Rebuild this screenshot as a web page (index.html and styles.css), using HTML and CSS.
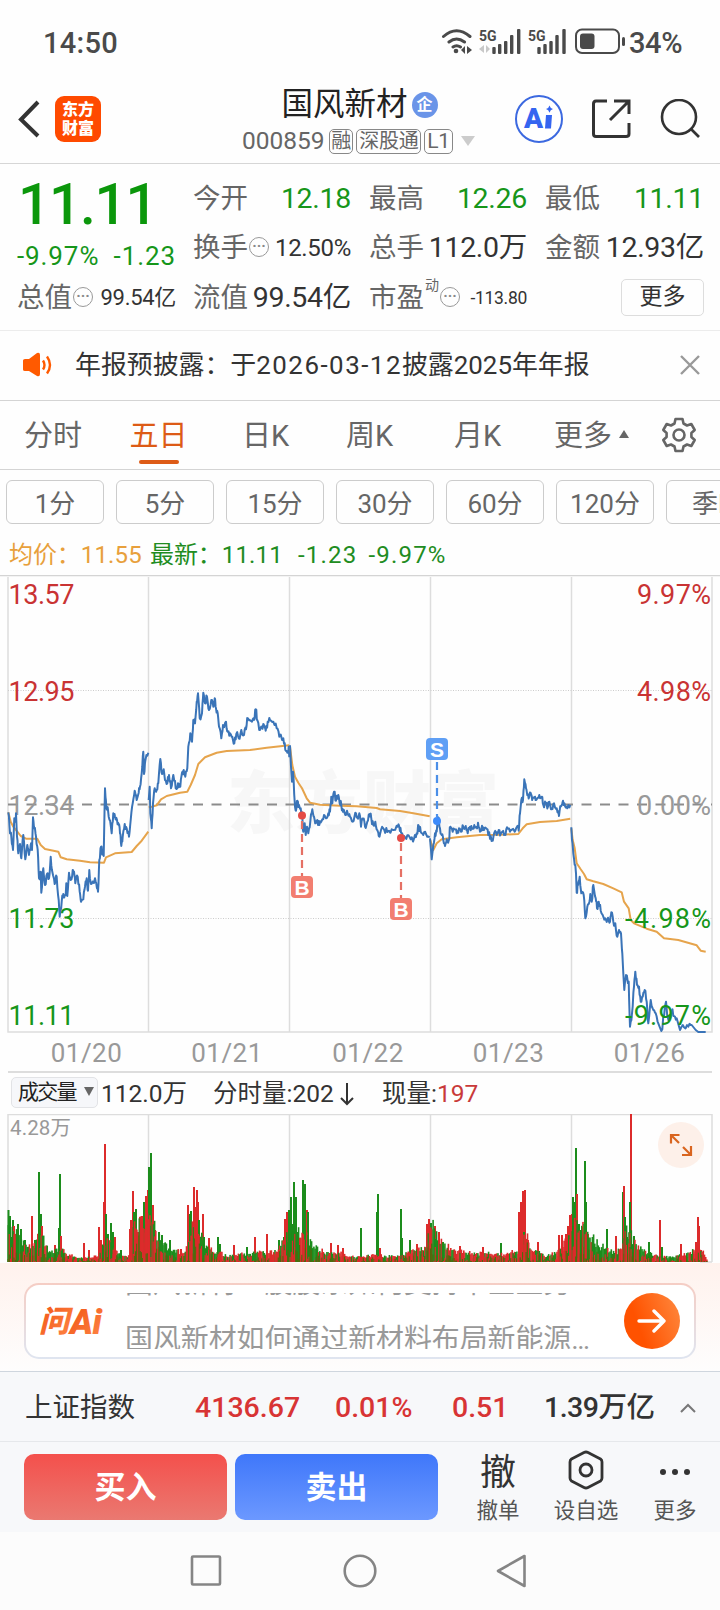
FILE: index.html
```html
<!DOCTYPE html>
<html lang="zh-CN">
<head>
<meta charset="utf-8">
<title>国风新材 000859</title>
<link rel="stylesheet" href="styles.css">
</head>
<body>
<div class="status">
  <span class="clock">14:50</span>
  <svg class="status-icons" width="186" height="30" viewBox="0 0 186 30">
    <g fill="none" stroke="#4a4a4a" stroke-width="3" stroke-linecap="round">
      <path d="M2.500 8.500Q15.500 -3 29 8.500M8 14Q15.500 8 23.500 14M12 19Q15.500 16.500 19.500 19"/>
    </g>
    <circle cx="15" cy="23" r="2.300" fill="#4a4a4a"/>
    <path d="M24 18v8l-4-4zM26 18v8l5-4z" fill="#4a4a4a"/>
    <text x="38" y="12.500" class="net">5G</text>
    <path d="M43 17v8l-5-4zM45 17v8l4-4z" fill="#c8c8c8"/>
    <g fill="#4a4a4a">
      <rect x="51.300" y="19" width="3.400" height="7" rx="1"/><rect x="57" y="16" width="3.400" height="10" rx="1"/><rect x="63" y="13" width="3.400" height="13" rx="1"/><rect x="69" y="7" width="3.400" height="19" rx="1"/><rect x="76" y="1" width="3.400" height="25" rx="1"/>
      <rect x="96.300" y="19" width="3.400" height="7" rx="1"/><rect x="102.300" y="16" width="3.400" height="10" rx="1"/><rect x="108.300" y="13" width="3.400" height="13" rx="1"/><rect x="114.300" y="7" width="3.400" height="19" rx="1"/><rect x="121.300" y="1" width="3.400" height="25" rx="1"/>
    </g>
    <text x="87" y="12.500" class="net">5G</text>
    <rect x="135" y="1.500" width="43" height="23.500" rx="6" fill="none" stroke="#4a4a4a" stroke-width="2"/>
    <rect x="139" y="5.500" width="14.500" height="15.500" rx="3" fill="#4a4a4a"/>
    <rect x="181" y="9" width="3" height="9" rx="1.500" fill="#4a4a4a"/>
  </svg>
  <span class="battery">34%</span>
</div>

<header class="header">
  <div class="head-left">
    <svg width="22" height="38" viewBox="0 0 22 38"><path d="M20 2L3 19.500L20 36" fill="none" stroke="#333" stroke-width="4"/></svg>
    <div class="logo"><span>东方</span><span>财富</span></div>
  </div>
  <div class="head-mid">
    <div class="name">国风新材<span class="qi">企</span></div>
    <div class="code"><span>000859</span><b class="tag t1">融</b><b class="tag t2">深股通</b><b class="tag t3">L1</b><i class="caret"></i></div>
  </div>
  <div class="head-right">
    <svg width="50" height="50" viewBox="0 0 50 50"><circle cx="25" cy="25" r="23" fill="#fff" stroke="#3c69e0" stroke-width="2"/><text x="10" y="34" class="ai">A</text><path d="M32 21h6l-1 13.500h-6zM35.500 11.500q.8 3 3.500 3.500q-2.700.7-3.500 3.700q-.8-3-3.500-3.700q2.700-.5 3.500-3.500z" fill="#3565f0"/></svg>
    <svg width="40" height="40" viewBox="0 0 40 40" fill="none" stroke="#333" stroke-width="3"><path d="M16 2H5Q2.500 2 2.500 5V35Q2.500 37.500 5 37.500H35Q38 37.500 38 35V24M23 2H38V15M37 3L19 21"/></svg>
    <svg width="40" height="40" viewBox="0 0 40 40" fill="none" stroke="#333" stroke-width="2.600"><circle cx="19" cy="18" r="17"/><path d="M31 30L39 38"/></svg>
  </div>
</header>

<section class="quote">
  <div class="lead">
    <div class="price">11.11</div>
    <div class="change"><span>-9.97%</span><span>-1.23</span></div>
    <div class="cell"><label>总值</label><i class="more-dot">···</i><span class="v v22">99.54亿</span></div>
  </div>
  <div class="stats">
    <div class="cell"><label>今开</label><span class="v g">12.18</span></div>
    <div class="cell"><label>最高</label><span class="v g">12.26</span></div>
    <div class="cell"><label>最低</label><span class="v g">11.11</span></div>
    <div class="cell"><label>换手</label><i class="more-dot">···</i><span class="v v24">12.50%</span></div>
    <div class="cell"><label>总手</label><span class="v">112.0万</span></div>
    <div class="cell"><label>金额</label><span class="v">12.93亿</span></div>
    <div class="cell"><label>流值</label><span class="v">99.54亿</span></div>
    <div class="cell"><label>市盈</label><sup>动</sup><i class="more-dot">···</i><span class="v v17">-113.80</span></div>
    <div class="cell"><span class="more-btn">更多</span></div>
  </div>
</section>

<section class="notice">
  <svg width="30" height="26" viewBox="0 0 30 26"><path d="M1 8.500Q1 7 3 7H7L15 1Q18 0 18 3V22Q18 25 15 24L7 19H3Q1 19 1 17.500z" fill="#ff5a00"/><path d="M21 8.500Q24 13 21 17.500M25 4.500Q31 13 25 21.500" fill="none" stroke="#ff5a00" stroke-width="2.400"/></svg>
  <p>年报预披露：于<span class="date">2026-03-12</span>披露2025年年报</p>
  <svg width="20" height="20" viewBox="0 0 20 20"><path d="M1 1L19 19M19 1L1 19" stroke="#999" stroke-width="2.400"/></svg>
</section>

<nav class="tabs">
  <span class="w1">分时</span><span class="w2 on">五日</span><span class="w3">日K</span><span class="w4">周K</span><span class="w5">月K</span><span class="w6">更多<i class="up"></i></span>
  <svg width="36" height="36" viewBox="-18 -18 36 36" fill="none" stroke="#666" stroke-width="2.600" stroke-linejoin="round"><path d="M-3.500 -16H3.500L4.500 -11.500L8 -9.500L12.300 -11L15.700 -5L12.400 -2V2L15.700 5L12.300 11L8 9.500L4.500 11.500L3.500 16H-3.500L-4.500 11.500L-8 9.500L-12.300 11L-15.700 5L-12.400 2V-2L-15.700 -5L-12.300 -11L-8 -9.500L-4.500 -11.500Z"/><circle r="5.500"/></svg>
</nav>

<div class="chips"><span>1分</span><span>5分</span><span>15分</span><span>30分</span><span>60分</span><span>120分</span><span>季K</span></div>

<div class="info"><span class="avg">均价：<em>11.55</em></span><span class="last">最新：<em>11.11</em><em class="wide">-1.23</em><em class="wide">-9.97%</em></span></div>

<svg class="chart" width="720" height="498" viewBox="0 575 720 498">
  <text x="227" y="828" class="wm" textLength="272">东方财富</text>
  <g stroke="#ddd" stroke-width="1.500" fill="none">
    <path d="M0 575.500H720" stroke="#d4d4d4"/>
    <path d="M8 577V1032H712V577M148.500 577V1032M289.500 577V1032M430.500 577V1032M571.500 577V1032"/>
    <path d="M8 690.500H712M8 918.500H712" stroke-width="1" stroke-dasharray="1 1.500" stroke="#ccc"/>
    <path d="M8 1072H712" stroke-width="2"/>
  </g>
  <path d="M8 804.500H712" stroke="#8c8c8c" stroke-width="2" stroke-dasharray="10 8.500"/>
  <g class="axis">
    <text x="8.500" y="604" class="r" textLength="66">13.57</text>
    <text x="8.500" y="701" class="r" textLength="66">12.95</text>
    <text x="8.500" y="815" class="n" textLength="66">12.34</text>
    <text x="8.500" y="928" class="g" textLength="66">11.73</text>
    <text x="8.500" y="1024.500" class="g" textLength="66">11.11</text>
  </g>
  <g id="lines" fill="none" stroke-linejoin="round"></g>
  <g class="axis end">
    <text x="711" y="604" class="r" textLength="74">9.97%</text>
    <text x="711" y="701" class="r" textLength="74">4.98%</text>
    <text x="711" y="815" class="n" textLength="74">0.00%</text>
    <text x="711" y="928" class="g" textLength="86">-4.98%</text>
    <text x="711" y="1024.500" class="g" textLength="86">-9.97%</text>
  </g>
  <g class="dates">
    <text x="86.500" y="1062">01/20</text><text x="227" y="1062">01/21</text><text x="368" y="1062">01/22</text><text x="508.500" y="1062">01/23</text><text x="649.500" y="1062">01/26</text>
  </g>
  <g stroke-width="2.200" stroke-dasharray="8 5" fill="none">
    <path d="M302 821V876M401 843V898" stroke="#e57064"/>
    <path d="M437 762V817" stroke="#4b8fe8"/>
  </g>
  <g fill="#e54b45"><circle cx="302" cy="815.500" r="4"/><circle cx="401" cy="838" r="4"/></g>
  <circle cx="437" cy="821" r="4" fill="#3d8bfa"/>
  <g fill="#f27e70"><rect x="291" y="876" width="22" height="22" rx="4"/><rect x="390" y="898" width="22" height="22" rx="4"/></g>
  <rect x="426" y="738" width="22" height="22" rx="4" fill="#5f9ff5"/>
  <g class="mark"><text x="302" y="894.500">B</text><text x="401" y="916.500">B</text><text x="437" y="756.500">S</text></g>
</svg>

<div class="volbar">
  <span class="pick">成交量<i class="down"></i></span><span class="v1">112.0万</span><span class="v2">分时量:202<svg width="14" height="24" viewBox="0 0 14 24"><path d="M7 1V22M1 16L7 22L13 16" fill="none" stroke="#333" stroke-width="2"/></svg></span><span class="v3">现量:<em>197</em></span>
</div>

<svg class="volume" width="720" height="149" viewBox="0 1114 720 149">
  <g stroke="#ddd" stroke-width="1.500" fill="none"><path d="M8 1262V1114.500H712V1262M148.500 1114V1262M289.500 1114V1262M430.500 1114V1262M571.500 1114V1262"/><path d="M700 1262H712"/></g>
  <text x="10" y="1135" class="vmax" textLength="61">4.28万</text>
  <g id="bars"></g>
  <circle cx="681" cy="1145" r="23" fill="#fdf0e9"/>
  <path d="M679 1143L671 1135M671 1143.500V1135H679.500M683 1147L691 1155M691 1146V1155H682" fill="none" stroke="#d9651f" stroke-width="2.200"/>
</svg>

<section class="ask">
  <div class="ask-card">
    <svg width="68" height="32" viewBox="0 0 68 32"><defs><linearGradient id="og" x1="0" y1="0" x2="1" y2="1"><stop offset="0" stop-color="#f04f10"/><stop offset="1" stop-color="#ff8a4a"/></linearGradient></defs><g fill="url(#og)"><text x="-1" y="27" class="wen">问</text><text x="30" y="28.500" class="wai">Ai</text></g></svg>
    <div class="ticker"><p>国风新材一股股东如何支持中企业务</p><p>国风新材如何通过新材料布局新能源…</p></div>
    <span class="go"><svg width="30" height="24" viewBox="0 0 30 24"><path d="M2 12H27M17 2L27 12L17 22" fill="none" stroke="#fff" stroke-width="3.400" stroke-linecap="round" stroke-linejoin="round"/></svg></span>
  </div>
</section>

<section class="index">
  <span class="i0">上证指数</span><span class="i1">4136.67</span><span class="i2">0.01%</span><span class="i3">0.51</span><span class="i4">1.39万亿</span>
  <svg width="16" height="10" viewBox="0 0 16 10"><path d="M1 9L8 2L15 9" fill="none" stroke="#777" stroke-width="2"/></svg>
</section>

<section class="trade">
  <span class="btn buy">买入</span><span class="btn sell">卖出</span>
  <div class="act a1"><b>撤</b><span>撤单</span></div>
  <div class="act a2"><svg width="40" height="40" viewBox="-20 -20 40 40" fill="none" stroke="#333" stroke-width="2.800" stroke-linejoin="round"><path d="M-2 -17.500Q0 -18.500 2 -17.500L14.500 -11Q16 -10 16 -8V8Q16 10 14.500 11L2 17.500Q0 18.500 -2 17.500L-14.500 11Q-16 10 -16 8V-8Q-16 -10 -14.500 -11Z"/><circle r="6"/></svg><span>设自选</span></div>
  <div class="act a3"><svg width="40" height="40" viewBox="-20 -20 40 40" fill="#333"><circle cx="-12" cy="2" r="3"/><circle cy="2" r="3"/><circle cx="12" cy="2" r="3"/></svg><span>更多</span></div>
</section>

<footer class="sysnav">
  <svg width="340" height="36" viewBox="0 0 340 36" fill="none" stroke="#858585" stroke-width="2.600" stroke-linejoin="round"><rect x="3" y="3.500" width="28" height="28" rx="1"/><circle cx="171" cy="18" r="15.300"/><path d="M335.500 3V33L309 18Z"/></svg>
</footer>
<script src="chart.js"></script>
</body>
</html>
```
FILE: styles.css
```css
* { box-sizing: border-box; }
body { margin: 0; width: 720px; background: #fefefe; color: #333; font-family: Roboto, "Noto Sans CJK SC", sans-serif; overflow: hidden; }
svg { display: block; flex: none; }
i, em { font-style: normal; }
p { margin: 0; }
.status { height: 84px; padding: 1px 0 0 43px; display: flex; align-items: center; font-size: 29px; font-weight: 500; color: #4a4a4a; }
.clock { width: 74px; letter-spacing: .3px; }
.status-icons { margin-left: 324px; }
.net { font: 700 14px Roboto, sans-serif; fill: #4a4a4a; }
.battery { margin-left: 2px; letter-spacing: -.4px; }
.header { height: 80px; border-bottom: 1px solid #d6d6d6; display: grid; grid-template-columns: 242px 233px 1fr; }
.head-left { display: flex; align-items: center; padding: 0 0 9px 18px; gap: 15px; }
.logo { width: 46px; height: 46px; border-radius: 9px; background: #ff4a00; color: #fff; font-size: 16px; font-weight: 900; line-height: 19px; display: flex; flex-direction: column; align-items: center; justify-content: center; }
.head-mid { display: flex; flex-direction: column; }
.name { height: 41px; display: flex; align-items: center; justify-content: center; font-size: 31.500px; line-height: 40px; color: #222; white-space: nowrap; gap: 4px; padding-left: 2px; }
.qi { width: 26px; height: 26px; border-radius: 50%; background: #6a94e8; color: #fff; font-size: 16px; font-weight: 700; line-height: 25px; text-align: center; }
.code { display: flex; align-items: center; height: 32px; font-size: 24.500px; color: #666; line-height: 30px; }
.code span { width: 87px; }
.tag { height: 25px; border: 1.500px solid #888; border-radius: 5px; font-weight: 400; font-size: 20px; line-height: 22px; text-align: center; margin-right: 3px; white-space: nowrap; letter-spacing: -.3px; }
.t1 { width: 25px; }
.t2 { width: 65px; }
.t3 { width: 29px; font-size: 21px; }
.caret { margin-left: 5px; border: 7px solid transparent; border-top: 10px solid #ccc; border-bottom: 0; }
.head-right { display: flex; align-items: center; padding: 0 0 9px 39px; gap: 27px; }
.head-right svg:nth-child(2) { margin-right: 2px; }
.ai { font: 900 28px Roboto, sans-serif; fill: #3565f0; }
.quote { height: 167px; padding: 10px 16px 0 17px; border-bottom: 1px solid #ececec; display: grid; grid-template-columns: 159px 511px; gap: 17px; }
.price { height: 63px; line-height: 62px; font-size: 57px; font-weight: 500; color: #0b970b; letter-spacing: -1.400px; padding-left: 1px; }
.change { height: 36px; line-height: 38px; font-size: 26px; color: #16961a; display: flex; justify-content: space-between; letter-spacing: .9px; }
.stats { display: grid; grid-template-columns: 158px 158px 159px; grid-auto-rows: 49.500px; column-gap: 18px; }
.cell { display: flex; align-items: center; height: 49.500px; white-space: nowrap; }
.cell label { font-size: 27.500px; color: #666; line-height: 40px; }
.v { margin-left: auto; font-size: 28.500px; color: #333; letter-spacing: -.3px; line-height: 40px; }
.v22 { font-size: 22px; }
.v24 { font-size: 24px; }
.v17 { font-size: 17.500px; }
.g { color: #16961a; fill: #16961a; }
.more-dot { width: 20px; height: 20px; border: 1.500px solid #999; border-radius: 50%; font-size: 15px; font-weight: 700; line-height: 17px; text-align: center; color: #888; margin: 0 0 2px 1px; }
.cell sup { font-size: 14px; line-height: 14px; color: #666; align-self: flex-start; margin: 5px 0 0 1px; }
.more-btn { margin-left: auto; width: 83px; height: 37px; border: 1px solid #ddd; border-radius: 5px; font-size: 23px; line-height: 34px; text-align: center; }
.notice { height: 70px; padding: 0 20px 1px 22px; border-bottom: 1px solid #d4d4d4; display: flex; align-items: center; }
.notice p { font-size: 25.900px; margin-left: 23px; flex: 1; line-height: 40px; white-space: nowrap; }
.date { letter-spacing: 1.500px; }
.tabs { height: 69px; border-bottom: 1px solid #d4d4d4; display: flex; font-size: 29px; color: #666; line-height: 71px; padding-left: 24px; align-items: center; white-space: nowrap; }
.tabs span { position: relative; height: 68px; }
.tabs svg { margin-left: 32px; }
.w1 { width: 105.500px; } .w2 { width: 112.500px; } .w3 { width: 104px; } .w4 { width: 108px; } .w5 { width: 100px; } .w6 { width: 75px; }
.on { color: #dd5b16; }
.on::after { content: ""; position: absolute; left: 9px; top: 59px; width: 40px; height: 4px; border-radius: 2px; background: #dd5b16; }
.up { display: inline-block; border: 5px solid transparent; border-bottom: 8px solid #666; border-top: 0; margin-left: 7px; vertical-align: 8px; }
.chips { height: 63px; padding: 10px 0 0 6px; display: flex; gap: 12px; overflow: hidden; }
.chips span { flex: 0 0 98px; height: 44px; border: 1px solid #ccc; border-radius: 6px; font-size: 26px; line-height: 46px; text-align: center; color: #666; }
.chips span:last-child { text-align: left; padding-left: 25px; }
.info { height: 42px; padding-left: 9px; display: flex; font-size: 24px; line-height: 44px; white-space: nowrap; letter-spacing: -.1px; }
.avg { width: 141px; color: #e8a03c; }
.last { color: #218c21; display: flex; }
.last em { margin-right: 15px; letter-spacing: .2px; }
.last .wide { letter-spacing: 1.200px; margin-right: 11px; }
.avg em { letter-spacing: .2px; }
.wm { font: 900 68px "Noto Sans CJK SC", sans-serif; fill: #f7f7f7; }
.axis { font-size: 27px; }
.end { text-anchor: end; }
.r { fill: #c93333; } .n { fill: #999; }
.dates { font-size: 26px; fill: #999; text-anchor: middle; letter-spacing: .5px; }
.mark { font: 700 21px "Liberation Sans", sans-serif; fill: #fff; text-anchor: middle; }
.volbar { height: 41px; display: flex; align-items: center; font-size: 24.500px; line-height: 38px; white-space: nowrap; padding: 0 0 0 11px; }
.pick { width: 87px; height: 31px; border: 1px solid #e2e3e6; border-radius: 5px; background: #f6f7fa; font-size: 21px; line-height: 29px; letter-spacing: -1.800px; padding-left: 6px; color: #222; margin-bottom: 2px; }
.down { display: inline-block; border: 5px solid transparent; border-top: 9px solid #666; border-bottom: 0; margin-left: 8px; vertical-align: 3px; }
.v1 { width: 112px; margin-left: 3px; }
.v2 { width: 169px; display: flex; align-items: center; }
.v2 svg { margin-left: 6px; }
.v3 em { color: #c93a3a; }
.vmax { font-size: 20.500px; fill: #999; }
.ask { height: 108px; background: linear-gradient(#fff2ed, #fefdfd); padding: 20px 24px 0; }
.ask-card { height: 76px; border: 2px solid transparent; border-radius: 15px; background: linear-gradient(#fff, #fff) padding-box, linear-gradient(#f5cdc4, #dfe5f0) border-box; display: flex; align-items: center; padding: 0 14px; }
.wen { font: 900 30px "Noto Sans CJK SC", sans-serif; font-style: italic; }
.wai { font: 900 35px Roboto, sans-serif; font-style: italic; letter-spacing: -.5px; }
.ticker { margin-left: 17px; width: 477px; height: 56px; overflow: hidden; font-size: 27.900px; line-height: 56px; color: #999; white-space: nowrap; }
.ticker p:first-child { margin-top: -37px; }
.go { margin-left: auto; width: 56px; height: 56px; border-radius: 50%; background: linear-gradient(70deg, #ff5200 30%, #ff8a40); display: flex; align-items: center; justify-content: center; }
.index { height: 70px; border-top: 1px solid #cfd6de; background: #f7f8fa; display: flex; align-items: center; padding: 2px 0 0 25px; font-size: 28.500px; font-weight: 500; white-space: nowrap; line-height: 40px; }
.i0 { width: 170px; font-size: 27.500px; font-weight: 400; }
.i1 { width: 140px; } .i2 { width: 117px; } .i3 { width: 92px; } .i4 { width: 136px; letter-spacing: -.5px; }
.i1, .i2, .i3 { color: #d83434; }
.trade { height: 91px; border-top: 1px solid #e6e8eb; background: #f7f8fa; display: flex; padding: 12px 0 0 24px; }
.btn { width: 203px; height: 66px; border-radius: 10px; color: #fff; font-weight: 700; font-size: 31px; line-height: 67px; text-align: center; margin-right: 8px; }
.buy { background: linear-gradient(#f4504c, #ea7971); }
.sell { background: linear-gradient(#3f77fa, #6c98ff); }
.act { display: flex; flex-direction: column; align-items: center; font-size: 21.500px; color: #555; line-height: 30px; white-space: nowrap; margin-top: -4px; }
.act b { font-size: 36px; font-weight: 400; height: 46px; line-height: 46px; color: #333; }
.act svg { margin-bottom: 6px; }
.a1 { width: 60px; margin-left: 22px; } .a2 { width: 70px; margin-left: 23px; } .a3 { width: 50px; margin-left: 29px; }
.sysnav { height: 78px; padding: 21px 0 0 189px; background: #fcfcfc; }
```
FILE: chart.js
```js
// Each day's polylines share one scale: thirds of a pixel from the origin ox, oy.
const days = [
  { ox: 0, oy: 570,
    price: "25,727 30,790 34,800 39,840 43,745 47,755 48,730 51,800 55,850 60,822 64,865 70,795 76,868 82,825 87,855 92,825 96,840 99,742 103,775 108,800 113,840 117,925 122,905 124,968 130,895 135,945 141,912 147,925 152,860 157,905 164,942 170,920 176,990 179,1040 185,995 190,972 197,975 199,940 202,978 207,908 212,930 218,900 222,905 226,940 233,920 239,965 243,995 250,988 255,950 260,925 264,962 268,900 273,942 280,935 285,925 290,950 294,965 298,870 303,830 308,850 311,858 315,655 319,710 323,712 326,740 332,765 335,790 340,730 345,740 351,750 356,765 360,790 364,828 368,800 374,762 380,775 387,800 392,750 398,700 404,662 410,690 416,668 420,650 425,610 430,545 432,612 436,572 445,548",
    avg: "25,727 32,755 40,770 52,785 62,798 78,806 112,806 122,825 135,837 175,845 182,862 200,868 240,872 270,877 312,878 318,862 345,850 395,846 410,828 425,812 445,785" },
  { ox: 0, oy: 570,
    price: "446,690 449,650 451,730 455,775 459,700 464,655 470,660 475,640 481,567 486,612 491,598 495,630 502,640 507,615 513,655 520,615 527,655 534,640 541,650 546,608 551,600 556,620 562,595 565,530 571,490 576,515 580,450 585,460 590,395 594,370 599,445 606,430 610,368 615,400 621,380 627,420 634,390 640,410 644,385 648,415 653,430 657,470 664,505 669,465 678,455 683,485 690,490 697,500 703,520 709,492 716,505 724,480 732,495 738,478 743,445 749,450 756,455 762,450 767,418 772,450 780,480 785,470 792,465 797,482 803,455 810,450 820,455 830,475 838,500 850,505 856,540 862,548 866,530 868,562",
    avg: "446,712 455,710 470,706 483,688 500,678 540,668 562,665 572,645 585,615 595,582 615,562 650,548 680,543 750,540 800,533 868,526" },
  { ox: 280, oy: 680,
    price: "30,196 33,260 36,305 39,275 44,365 48,392 52,362 57,375 62,385 66,405 70,455 74,430 77,465 81,440 85,460 91,425 97,388 102,410 107,430 112,420 118,435 124,425 132,405 138,415 145,400 150,395 154,350 157,370 162,335 168,362 175,345 179,370 184,375 189,395 196,405 203,400 210,410 218,425 226,398 232,410 238,400 243,440 249,418 255,440 262,425 268,402 274,415 280,435 286,425 292,450 296,468 303,450 312,448 322,456 335,448 350,437 358,440 363,458 372,468 382,466 392,478 402,476 410,460 416,437 422,455 430,465 438,462 449,472",
    avg: "30,200 37,255 45,290 55,308 66,325 80,355 90,368 120,374 180,377 230,379 290,384 300,388 360,393 400,400 449,409" },
  { ox: 280, oy: 680,
    price: "450,475 453,510 455,538 460,495 465,460 470,455 474,412 480,445 485,465 490,480 495,498 500,478 506,482 511,440 518,455 525,448 530,460 537,445 543,455 550,440 557,438 563,460 570,440 576,446 583,435 590,440 594,428 600,455 606,437 612,450 618,445 625,465 632,468 636,482 643,458 650,465 656,450 662,462 667,455 674,462 681,442 690,455 697,448 704,455 711,440 716,452 720,400 724,360 729,360 733,298 738,325 742,345 748,350 753,342 758,355 765,350 770,358 778,345 785,350 790,375 797,370 804,380 808,365 815,388 822,370 830,385 837,408 842,380 849,362 855,378 862,385 871,375",
    avg: "451,480 460,510 470,490 485,478 530,472 600,465 660,464 715,462 728,445 740,433 780,426 830,423 871,416" },
  { ox: 550, oy: 740,
    price: "64,262 66,300 70,340 76,375 78,400 80,458 84,435 89,410 94,460 101,465 106,535 112,500 117,490 121,462 125,485 130,435 137,475 141,505 146,485 152,512 160,530 168,540 174,533 180,545 184,517 190,545 196,550 202,590 207,570 213,580 217,640 220,700 223,750 228,705 236,725 240,860 246,820 252,740 256,695 261,735 267,740 272,785 278,770 284,750 290,785 295,850 302,780 310,810 317,820 325,850 334,873 342,830 348,785 353,830 360,835 365,812 372,828 380,835 390,870 402,862 415,860 425,855 437,870 445,877 467,877",
    avg: "64,265 68,300 74,325 80,370 92,388 102,402 110,418 130,424 160,432 190,445 215,457 222,485 236,505 242,540 252,550 290,566 320,575 342,595 385,600 440,616 452,632 467,635" }
];

let seed = 11;
function rnd() { seed = (seed * 16807) % 2147483647; return seed / 2147483647; }

function place(str, d) {
  return str.split(" ").map(p => { const [x, y] = p.split(",").map(Number); return [d.ox + x / 3, d.oy + y / 3]; });
}
// Adds minute-level jitter between two turning points.
function jitter(points) {
  const out = [points[0]];
  for (let i = 1; i < points.length; i++) {
    const [x0, y0] = points[i - 1], [x1, y1] = points[i];
    if (x1 - x0 > 1.2 && y1 < 1030) {
      out.push([x0 + (x1 - x0) * .35, y0 + (y1 - y0) * .35 + (rnd() - .5) * 7]);
      out.push([x0 + (x1 - x0) * .7, y0 + (y1 - y0) * .7 + (rnd() - .5) * 7]);
    }
    out.push(points[i]);
  }
  return out;
}
function polyline(points, color, width) {
  const s = points.map(p => p[0].toFixed(1) + "," + Math.min(p[1], 1032).toFixed(1)).join(" ");
  return `<polyline points="${s}" stroke="${color}" stroke-width="${width}"/>`;
}
document.getElementById("lines").innerHTML = days.map(d =>
  polyline(place(d.avg, d), "#e6a44c", 2) + polyline(jitter(place(d.price, d)), "#3a74b8", 2)).join("");

const base = "8:30 14:25 25:18 32:12 40:28 48:8 60:12 66:7 80:4 97:5 100:12 108:18 115:14 120:6 128:5 131:30 150:36 156:26 165:14 180:9 187:12 190:30 200:28 205:14 215:9 230:5 240:7 255:8 277:9 284:22 300:28 308:20 312:14 325:8 340:8 355:4 375:6 390:5 408:8 425:14 430:34 440:20 450:11 470:8 500:7 520:10 525:28 530:12 545:5 555:8 568:22 575:36 588:24 600:14 615:9 622:12 626:30 634:18 645:8 670:4 690:8 697:16 703:8 707:1"
  .split(" ").map(s => s.split(":").map(Number));
const peaks = "8.5:52g 10:46g 13:42g 14:36r 18:38g 21:33g 25:22g 32:46r 35:22g 39:90g 41:48g 42:36r 55:17r 60:88g 59:34g 61:26r 84:19r 89:12r 99:35r 101:22r 105:118r 104:60r 106:48g 108:28g 111:39g 113:30g 115:25r 121:12g 130:33r 131:42r 133:71r 134:50g 136:53g 138:30r 140:45r 142:46r 144:60g 146:66r 148:72r 149:95g 151:109g 153:57r 155:32r 159:30g 162:27g 170:22g 181:13r 188:57r 190:48g 191:51g 194:75r 197:72r 196:55r 198:60r 199:42g 203:48r 204:25g 209:24r 218:25g 220:18g 234:17r 247:15g 255:25r 267:28r 279:22g 284:25g 285:43r 287:50r 289:52g 291:65g 293:38g 294:80g 296:65g 298:30g 303:82g 305:78g 307:52r 308:50g 331:19r 338:17r 343:14r 361:34g 377:50g 378:68g 380:14r 401:53g 402:24g 410:22g 417:18r 427:38r 429:43r 431:39g 435:36r 439:30r 443:20g 460:16r 483:15r 501:19g 519:50r 521:60r 523:71r 525:72r 524:30g 528:22r 538:20r 559:27r 562:27r 566:28r 568:36r 570:47r 572:48r 573:65g 575:60g 576:114g 577:68r 579:38g 582:35g 585:101g 586:60g 588:28r 607:33g 616:26r 623:70g 624:76r 625:45g 627:25g 631:148r 630:60g 634:26g 649:20g 660:42r 662:15g 681:18r 696:20r 698:45r 699:36r 701:12r".split(" ");
// Stretches where one colour dominates; the value is the share of red bars.
const mood = [[8, .3], [62, .6], [97, .45], [128, .85], [148, .4], [158, .25], [178, .8], [202, .45], [283, .6], [289, .3], [320, .65], [408, .5], [424, .8], [433, .3], [447, .7], [517, .85], [527, .5], [556, .85], [572, .35], [640, .5], [694, .95]];
function height(x) {
  let i = 1;
  while (i < base.length - 1 && base[i][0] < x) i++;
  const [x0, h0] = base[i - 1], [x1, h1] = base[i];
  return h0 + (h1 - h0) * (x - x0) / (x1 - x0);
}
function bar(x, h, c, w) {
  return `<rect x="${x.toFixed(1)}" y="${(1262 - h).toFixed(1)}" width="${w}" height="${h.toFixed(1)}" fill="${c}"/>`;
}
const RED = "#dc2b2b", GREEN = "#1c8c1c";
let bars = peaks.map(p => {
  const [x, v] = p.split(":");
  return bar(+x - 1, parseFloat(v), v.endsWith("r") ? RED : GREEN, 2);
}).join("");
for (let x = 7.5; x < 707; x += 1.18) {
  const share = mood.filter(m => m[0] <= x + 1).pop()[1];
  const top = Math.max(2.5, height(x) * (.8 + rnd() * .6));
  bars += bar(x, top, rnd() < share ? RED : GREEN, 1.6);
  bars += bar(x, Math.max(1, top * rnd() * .7), rnd() < .5 ? RED : "#4f6a0c", 1.4);
}
document.getElementById("bars").innerHTML = bars;
```
